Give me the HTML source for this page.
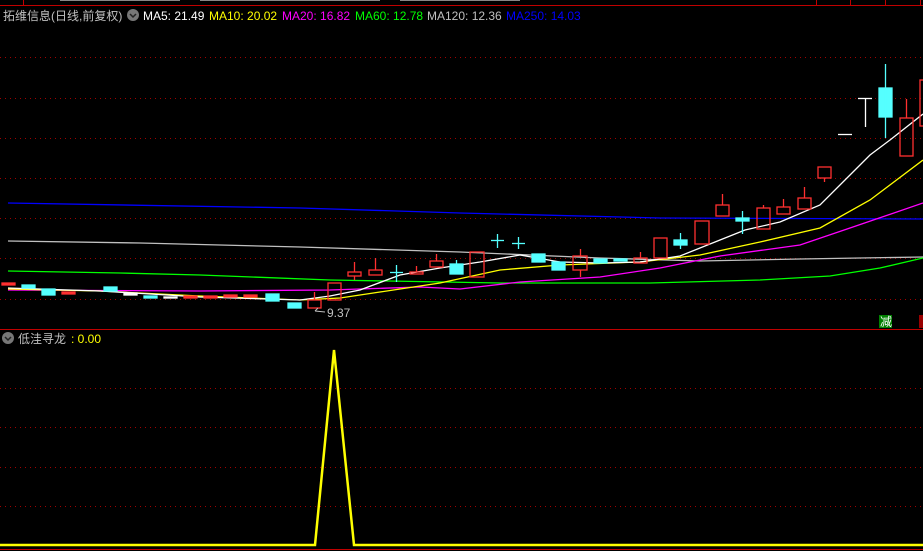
<!DOCTYPE html>
<html><head><meta charset="utf-8"><style>
html,body{margin:0;padding:0;background:#000;width:923px;height:551px;overflow:hidden}
svg{display:block}
text{font-family:"Liberation Sans","Noto Sans CJK SC",sans-serif;font-size:12px}
</style></head><body>
<svg width="923" height="551" viewBox="0 0 923 551" xmlns="http://www.w3.org/2000/svg">
<rect width="923" height="551" fill="#000"/>
<line x1="0" y1="5.5" x2="923" y2="5.5" stroke="#c00000"/>
<line x1="23.5" y1="0" x2="23.5" y2="5" stroke="#c00000"/>
<line x1="816.5" y1="0" x2="816.5" y2="5" stroke="#c00000"/>
<line x1="850.5" y1="0" x2="850.5" y2="5" stroke="#c00000"/>
<line x1="885.5" y1="0" x2="885.5" y2="5" stroke="#c00000"/>
<line x1="920.5" y1="0" x2="920.5" y2="5" stroke="#c00000"/>
<g fill="#888"><rect x="60" y="0" width="120" height="1"/><rect x="200" y="0" width="180" height="1"/><rect x="400" y="0" width="120" height="1"/></g>
<text x="3" y="20" fill="#c0c0c0" font-size="13">拓维信息(日线,前复权)</text>
<circle cx="133" cy="15" r="6" fill="#777"/><path d="M130 14 l3 3 l3 -3" stroke="#222" stroke-width="1.5" fill="none"/>
<text x="143" y="20" fill="#fff">MA5: 21.49</text>
<text x="209" y="20" fill="#ffff00">MA10: 20.02</text>
<text x="282" y="20" fill="#ff00ff">MA20: 16.82</text>
<text x="355" y="20" fill="#00ff00">MA60: 12.78</text>
<text x="427" y="20" fill="#c0c0c0">MA120: 12.36</text>
<text x="506" y="20" fill="#0000ff">MA250: 14.03</text>
<g stroke="#a00000" stroke-dasharray="1,4">
<line x1="0" y1="57.5" x2="923" y2="57.5"/><line x1="0" y1="98.5" x2="923" y2="98.5"/>
<line x1="0" y1="138.5" x2="923" y2="138.5"/><line x1="0" y1="178.5" x2="923" y2="178.5"/>
<line x1="0" y1="218.5" x2="923" y2="218.5"/><line x1="0" y1="258.5" x2="923" y2="258.5"/>
<line x1="0" y1="299.5" x2="923" y2="299.5"/>
<line x1="0" y1="388.5" x2="923" y2="388.5"/><line x1="0" y1="427.5" x2="923" y2="427.5"/>
<line x1="0" y1="467.5" x2="923" y2="467.5"/><line x1="0" y1="506.5" x2="923" y2="506.5"/>
</g>
<line x1="0" y1="329.5" x2="923" y2="329.5" stroke="#c00000"/>
<line x1="0" y1="549.5" x2="923" y2="549.5" stroke="#c00000"/>
<g fill="none" stroke-width="1.3">
<polyline stroke="#0000ff" points="8,203 300,208 460,213 660,218 923,219"/>
<polyline stroke="#c0c0c0" points="8,241 140,243 300,247 460,252 600,258 700,261 800,259 923,257"/>
<polyline stroke="#00ff00" points="8,271 120,273 200,275 330,280 500,283 650,283 760,280 830,276 880,268 923,258"/>
<polyline stroke="#ff00ff" points="8,290 200,291 330,290 420,287 460,289 520,282 600,277 660,268 720,256 800,245 850,228 923,203"/>
<polyline stroke="#ffff00" points="8,289 100,291 200,296 300,300 340,298 380,292 440,283 500,270 560,265 640,262 700,255 760,242 820,228 870,200 923,160"/>
<polyline stroke="#ffffff" points="8,288 100,291 200,297 300,300 330,296 360,290 400,275 440,268 480,262 520,255 560,262 600,263 640,262 680,256 720,240 745,230 780,222 820,205 850,175 870,155 890,140 923,114"/>
</g>
<g stroke-width="1.3">
<g fill="#ff3030" stroke="#ff3030">
<rect x="2" y="283" width="13" height="2"/><rect x="62" y="292" width="13" height="2"/>
<rect x="184" y="296" width="13" height="2"/><rect x="204" y="296" width="13" height="2"/><rect x="224" y="295" width="13" height="2"/><rect x="244" y="295" width="13" height="2"/>
</g>
<g fill="#55ffff" stroke="#55ffff">
<rect x="22" y="285" width="13" height="3"/><rect x="42" y="289" width="13" height="6"/><rect x="104" y="287" width="13" height="4"/>
<rect x="144" y="296" width="13" height="2"/><rect x="266" y="294" width="13" height="7"/><rect x="288" y="303" width="13" height="5"/>
<rect x="450" y="264" width="13" height="10"/><line x1="456.5" y1="260" x2="456.5" y2="264"/>
<rect x="532" y="254" width="13" height="8"/><rect x="552" y="262" width="13" height="8"/>
<rect x="594" y="259" width="13" height="4"/><rect x="614" y="259" width="13" height="2"/>
<rect x="674" y="240" width="13" height="5"/><line x1="680.5" y1="233" x2="680.5" y2="249"/>
<rect x="736" y="218" width="13" height="3"/><line x1="742.5" y1="211" x2="742.5" y2="234"/>
<rect x="879" y="88" width="13" height="29"/><line x1="885.5" y1="64" x2="885.5" y2="138"/>
<line x1="390" y1="272.5" x2="403" y2="272.5"/><line x1="396.5" y1="265" x2="396.5" y2="282"/>
<line x1="491" y1="240.5" x2="504" y2="240.5"/><line x1="497.5" y1="234" x2="497.5" y2="248"/>
<line x1="512" y1="243.5" x2="525" y2="243.5"/><line x1="518.5" y1="237" x2="518.5" y2="249"/>
</g>
<g fill="#fff" stroke="#fff">
<rect x="124" y="293" width="13" height="2"/><rect x="164" y="297" width="13" height="1"/>
<line x1="838" y1="134.5" x2="852" y2="134.5"/>
<line x1="858" y1="98.5" x2="872" y2="98.5"/><line x1="865.5" y1="98" x2="865.5" y2="127"/>
</g>
<g fill="none" stroke="#ff3030">
<rect x="308" y="300" width="13" height="8"/><line x1="314.5" y1="292" x2="314.5" y2="300"/>
<rect x="328" y="283" width="13" height="17"/>
<rect x="348" y="272" width="13" height="4"/><line x1="354.5" y1="262" x2="354.5" y2="272"/><line x1="354.5" y1="276" x2="354.5" y2="280"/>
<rect x="369" y="270" width="13" height="5"/><line x1="375.5" y1="258" x2="375.5" y2="270"/>
<rect x="410" y="272" width="13" height="2"/><line x1="416.5" y1="266" x2="416.5" y2="272"/>
<rect x="430" y="261" width="13" height="6"/><line x1="436.5" y1="254" x2="436.5" y2="261"/>
<rect x="470" y="252" width="14" height="25"/>
<rect x="573" y="256" width="14" height="14"/><line x1="580.5" y1="249" x2="580.5" y2="256"/><line x1="580.5" y1="270" x2="580.5" y2="277"/>
<rect x="634" y="258" width="13" height="5"/><line x1="640.5" y1="252" x2="640.5" y2="258"/>
<rect x="654" y="238" width="13" height="20"/>
<rect x="695" y="221" width="14" height="23"/>
<rect x="716" y="205" width="13" height="11"/><line x1="722.5" y1="194" x2="722.5" y2="205"/>
<rect x="757" y="208" width="13" height="21"/><line x1="763.5" y1="205" x2="763.5" y2="208"/>
<rect x="777" y="207" width="13" height="7"/><line x1="783.5" y1="199" x2="783.5" y2="207"/>
<rect x="798" y="198" width="13" height="11"/><line x1="804.5" y1="187" x2="804.5" y2="198"/>
<rect x="818" y="167" width="13" height="11"/><line x1="824.5" y1="178" x2="824.5" y2="182"/>
<rect x="900" y="118" width="13" height="38"/><line x1="906.5" y1="99" x2="906.5" y2="118"/>
<rect x="920" y="80" width="8" height="46"/>
</g>
</g>
<text x="327" y="317" fill="#c0c0c0" font-size="11">9.37</text>
<path d="M315 311 l10 1 M315 311 l3 -3" stroke="#c0c0c0" fill="none"/>
<rect x="879" y="315" width="13" height="13" fill="#008000"/>
<text x="880" y="326" fill="#fff" font-size="11">减</text>
<rect x="919" y="315" width="5" height="13" fill="#900"/>
<circle cx="8" cy="338" r="6" fill="#777"/><path d="M5 337 l3 3 l3 -3" stroke="#222" stroke-width="1.5" fill="none"/>
<text x="18" y="343" fill="#c0c0c0" font-size="12">低洼寻龙</text>
<text x="71" y="343" fill="#ffff00" font-size="12">: 0.00</text>
<polyline fill="none" stroke="#ffff00" stroke-width="2.5" points="0,545 315,545 334,350 354,545 923,545"/>
</svg>
</body></html>
